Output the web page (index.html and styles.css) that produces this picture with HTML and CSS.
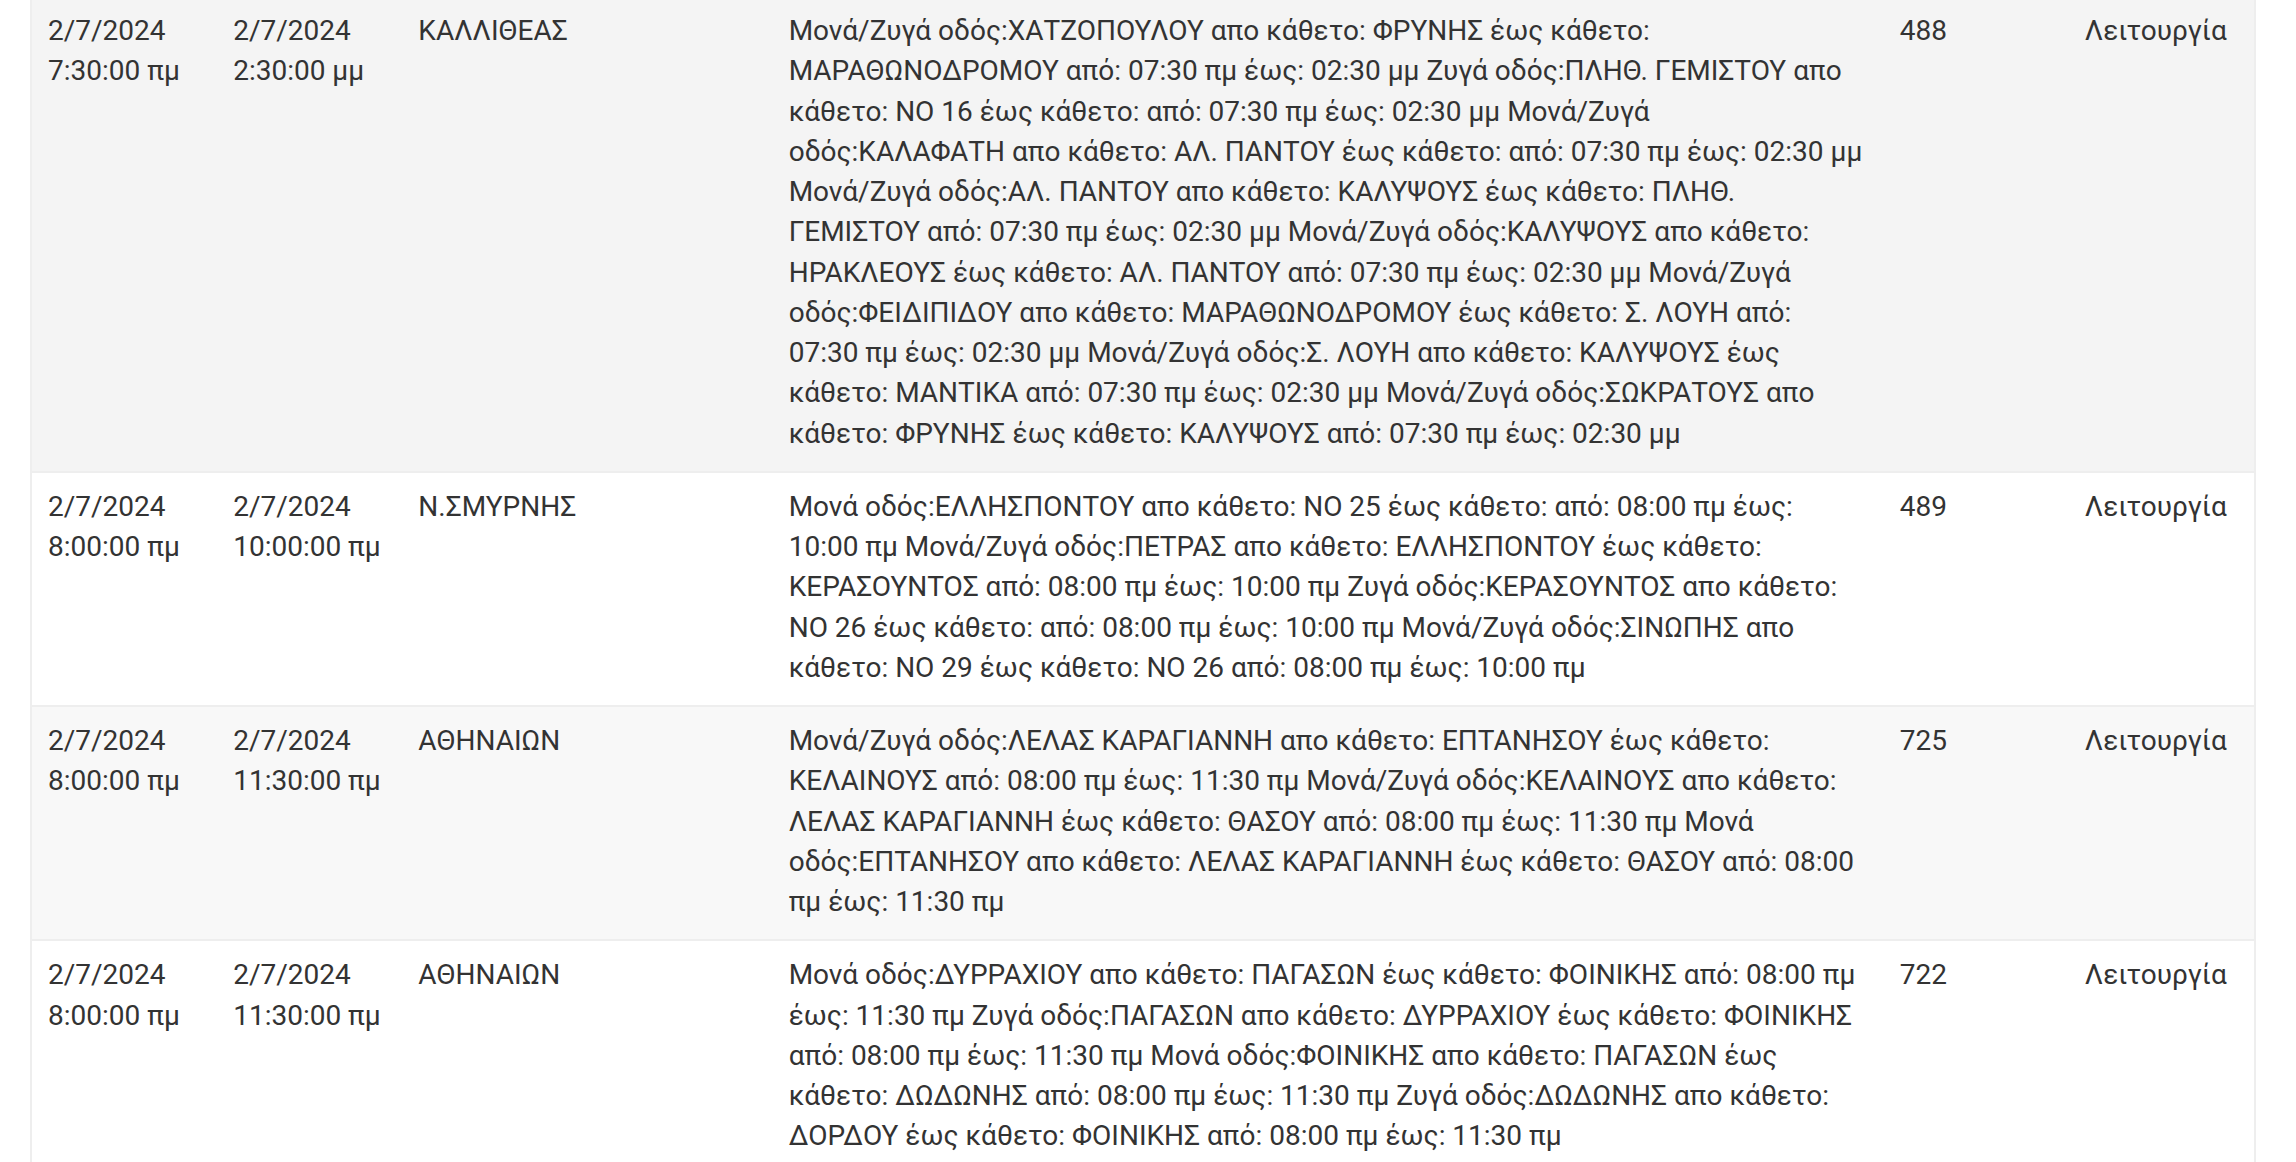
FILE: index.html
```html
<!DOCTYPE html>
<html lang="el">
<head>
<meta charset="utf-8">
<title>Διακοπές κυκλοφορίας</title>
<link rel="stylesheet" href="styles.css">
</head>
<body>
<div class="table">
  <div class="row row-hover">
    <div class="cell">2/7/2024 7:30:00 πμ</div>
    <div class="cell">2/7/2024 2:30:00 μμ</div>
    <div class="cell">ΚΑΛΛΙΘΕΑΣ</div>
    <div class="cell cell-desc">Μονά/Ζυγά οδός:ΧΑΤΖΟΠΟΥΛΟΥ απο κάθετο: ΦΡΥΝΗΣ έως κάθετο: ΜΑΡΑΘΩΝΟΔΡΟΜΟΥ από: 07:30 πμ έως: 02:30 μμ Ζυγά οδός:ΠΛΗΘ. ΓΕΜΙΣΤΟΥ απο κάθετο: ΝΟ 16 έως κάθετο: από: 07:30 πμ έως: 02:30 μμ Μονά/Ζυγά οδός:ΚΑΛΑΦΑΤΗ απο κάθετο: ΑΛ. ΠΑΝΤΟΥ έως κάθετο: από: 07:30 πμ έως: 02:30 μμ Μονά/Ζυγά οδός:ΑΛ. ΠΑΝΤΟΥ απο κάθετο: ΚΑΛΥΨΟΥΣ έως κάθετο: ΠΛΗΘ. ΓΕΜΙΣΤΟΥ από: 07:30 πμ έως: 02:30 μμ Μονά/Ζυγά οδός:ΚΑΛΥΨΟΥΣ απο κάθετο: ΗΡΑΚΛΕΟΥΣ έως κάθετο: ΑΛ. ΠΑΝΤΟΥ από: 07:30 πμ έως: 02:30 μμ Μονά/Ζυγά οδός:ΦΕΙΔΙΠΙΔΟΥ απο κάθετο: ΜΑΡΑΘΩΝΟΔΡΟΜΟΥ έως κάθετο: Σ. ΛΟΥΗ από: 07:30 πμ έως: 02:30 μμ Μονά/Ζυγά οδός:Σ. ΛΟΥΗ απο κάθετο: ΚΑΛΥΨΟΥΣ έως κάθετο: ΜΑΝΤΙΚΑ από: 07:30 πμ έως: 02:30 μμ Μονά/Ζυγά οδός:ΣΩΚΡΑΤΟΥΣ απο κάθετο: ΦΡΥΝΗΣ έως κάθετο: ΚΑΛΥΨΟΥΣ από: 07:30 πμ έως: 02:30 μμ</div>
    <div class="cell">488</div>
    <div class="cell">Λειτουργία</div>
  </div>
  <div class="row">
    <div class="cell">2/7/2024 8:00:00 πμ</div>
    <div class="cell">2/7/2024 10:00:00 πμ</div>
    <div class="cell">Ν.ΣΜΥΡΝΗΣ</div>
    <div class="cell cell-desc">Μονά οδός:ΕΛΛΗΣΠΟΝΤΟΥ απο κάθετο: ΝΟ 25 έως κάθετο: από: 08:00 πμ έως: 10:00 πμ Μονά/Ζυγά οδός:ΠΕΤΡΑΣ απο κάθετο: ΕΛΛΗΣΠΟΝΤΟΥ έως κάθετο: ΚΕΡΑΣΟΥΝΤΟΣ από: 08:00 πμ έως: 10:00 πμ Ζυγά οδός:ΚΕΡΑΣΟΥΝΤΟΣ απο κάθετο: ΝΟ 26 έως κάθετο: από: 08:00 πμ έως: 10:00 πμ Μονά/Ζυγά οδός:ΣΙΝΩΠΗΣ απο κάθετο: ΝΟ 29 έως κάθετο: ΝΟ 26 από: 08:00 πμ έως: 10:00 πμ</div>
    <div class="cell">489</div>
    <div class="cell">Λειτουργία</div>
  </div>
  <div class="row row-striped">
    <div class="cell">2/7/2024 8:00:00 πμ</div>
    <div class="cell">2/7/2024 11:30:00 πμ</div>
    <div class="cell">ΑΘΗΝΑΙΩΝ</div>
    <div class="cell cell-desc">Μονά/Ζυγά οδός:ΛΕΛΑΣ ΚΑΡΑΓΙΑΝΝΗ απο κάθετο: ΕΠΤΑΝΗΣΟΥ έως κάθετο: ΚΕΛΑΙΝΟΥΣ από: 08:00 πμ έως: 11:30 πμ Μονά/Ζυγά οδός:ΚΕΛΑΙΝΟΥΣ απο κάθετο: ΛΕΛΑΣ ΚΑΡΑΓΙΑΝΝΗ έως κάθετο: ΘΑΣΟΥ από: 08:00 πμ έως: 11:30 πμ Μονά οδός:ΕΠΤΑΝΗΣΟΥ απο κάθετο: ΛΕΛΑΣ ΚΑΡΑΓΙΑΝΝΗ έως κάθετο: ΘΑΣΟΥ από: 08:00 πμ έως: 11:30 πμ</div>
    <div class="cell">725</div>
    <div class="cell">Λειτουργία</div>
  </div>
  <div class="row">
    <div class="cell">2/7/2024 8:00:00 πμ</div>
    <div class="cell">2/7/2024 11:30:00 πμ</div>
    <div class="cell">ΑΘΗΝΑΙΩΝ</div>
    <div class="cell cell-desc">Μονά οδός:ΔΥΡΡΑΧΙΟΥ απο κάθετο: ΠΑΓΑΣΩΝ έως κάθετο: ΦΟΙΝΙΚΗΣ από: 08:00 πμ έως: 11:30 πμ Ζυγά οδός:ΠΑΓΑΣΩΝ απο κάθετο: ΔΥΡΡΑΧΙΟΥ έως κάθετο: ΦΟΙΝΙΚΗΣ από: 08:00 πμ έως: 11:30 πμ Μονά οδός:ΦΟΙΝΙΚΗΣ απο κάθετο: ΠΑΓΑΣΩΝ έως κάθετο: ΔΩΔΩΝΗΣ από: 08:00 πμ έως: 11:30 πμ Ζυγά οδός:ΔΩΔΩΝΗΣ απο κάθετο: ΔΟΡΔΟΥ έως κάθετο: ΦΟΙΝΙΚΗΣ από: 08:00 πμ έως: 11:30 πμ</div>
    <div class="cell">722</div>
    <div class="cell">Λειτουργία</div>
  </div>
</div>
</body>
</html>
```
FILE: styles.css
```css
html, body {
  margin: 0;
  padding: 0;
  background: #ffffff;
}
body {
  font-family: Roboto, "Noto Sans", sans-serif;
  font-size: 28px;
  line-height: 40.25px;
  color: #333333;
}
.table {
  margin: -3px 0 0 30px;
  width: 2226px;
  box-sizing: border-box;
  border-left: 2px solid #eeeeee;
  border-right: 2px solid #eeeeee;
}
.row {
  display: grid;
  grid-template-columns: 1fr 1fr 2fr 6fr 1fr 1fr;
  border-bottom: 2px solid #eeeeee;
  background: #ffffff;
}
.row-hover {
  background: #f4f4f4;
}
.row-striped {
  background: #f8f8f8;
}
.cell {
  padding: 14px 16px 17px 16px;
  min-width: 0;
}
.cell-desc {
  padding-right: 18px;
}
```
